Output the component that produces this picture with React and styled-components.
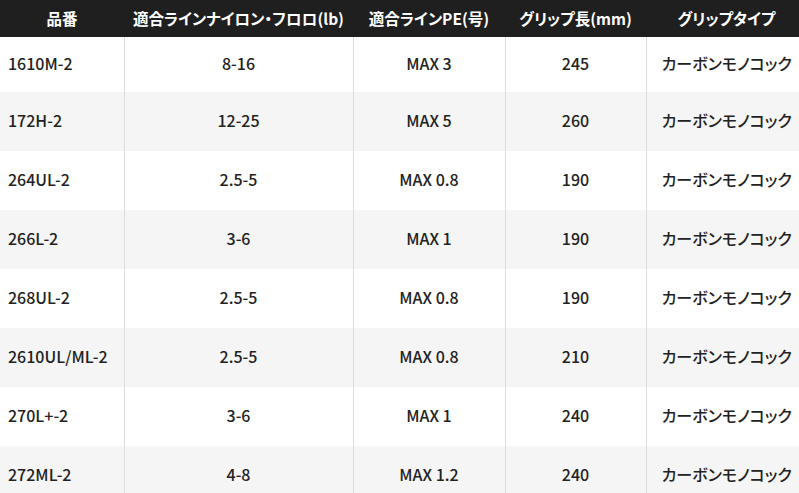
import React from "react";
import styled, { createGlobalStyle } from "styled-components";

const GlobalStyle = createGlobalStyle`
  html, body {
    margin: 0;
    padding: 0;
    background: #ffffff;
  }
  body {
    font-family: "Noto Sans CJK JP", "Noto Sans", sans-serif;
    color: #222222;
    font-feature-settings: "palt";
  }
`;

const Wrap = styled.div`
  width: 799px;
  height: 493px;
  overflow: hidden;
`;

const Table = styled.table`
  width: 807px;
  border-collapse: collapse;
  table-layout: fixed;
  font-size: 16px;
`;

const HeadCell = styled.th`
  background: #1f1f1f;
  color: #ffffff;
  font-weight: 700;
  font-size: 15.5px;
  height: 37px;
  padding: 0;
  text-align: center;
  border: none;
  white-space: nowrap;
  line-height: 1;
`;

const Row = styled.tr`
  height: 59px;
  background: ${(p) => (p.$striped ? "#f5f5f5" : "#ffffff")};

  &:first-child {
    height: 55px;
  }
`;

const Cell = styled.td`
  padding: 0 0 4px ${(p) => (p.$left ? "8px" : "0")};
  text-align: ${(p) => (p.$left ? "left" : "center")};
  font-weight: 500;
  color: #222222;
  border-left: ${(p) => (p.$left ? "none" : "1px solid #dddddd")};
  white-space: nowrap;
`;

const widths = [124, 229, 152, 141, 161];
const headers = [
  "品番",
  "適合ラインナイロン・フロロ(lb)",
  "適合ラインPE(号)",
  "グリップ長(mm)",
  "グリップタイプ",
];

const rows = [
  ["1610M-2", "8-16", "MAX 3", "245", "カーボンモノコック"],
  ["172H-2", "12-25", "MAX 5", "260", "カーボンモノコック"],
  ["264UL-2", "2.5-5", "MAX 0.8", "190", "カーボンモノコック"],
  ["266L-2", "3-6", "MAX 1", "190", "カーボンモノコック"],
  ["268UL-2", "2.5-5", "MAX 0.8", "190", "カーボンモノコック"],
  ["2610UL/ML-2", "2.5-5", "MAX 0.8", "210", "カーボンモノコック"],
  ["270L+-2", "3-6", "MAX 1", "240", "カーボンモノコック"],
  ["272ML-2", "4-8", "MAX 1.2", "240", "カーボンモノコック"],
];

const App = () => {
  return (
    <Wrap>
      <GlobalStyle />
      <Table>
        <colgroup>
          {widths.map((w, i) => (
            <col key={i} style={{ width: w }} />
          ))}
        </colgroup>
        <thead>
          <tr>
            {headers.map((h) => (
              <HeadCell key={h}>{h}</HeadCell>
            ))}
          </tr>
        </thead>
        <tbody>
          {rows.map((r, i) => (
            <Row key={r[0]} $striped={i % 2 === 1}>
              {r.map((c, j) => (
                <Cell key={j} $left={j === 0}>
                  {c}
                </Cell>
              ))}
            </Row>
          ))}
        </tbody>
      </Table>
    </Wrap>
  );
};

export default App;
